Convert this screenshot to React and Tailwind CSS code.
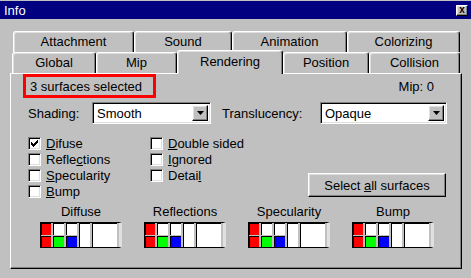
import React from 'react';

// Win95-style "Info" dialog, Rendering tab

const raised = 'border border-t-white border-l-white border-r-black border-b-black shadow-[inset_-1px_-1px_0_#808080,inset_1px_1px_0_#dfdfdf]';
const sunken = 'border border-t-[#808080] border-l-[#808080] border-r-white border-b-white shadow-[inset_1px_1px_0_#000,inset_-1px_-1px_0_#dfdfdf]';

const backTabs = [
  ['Attachment', 121],
  ['Sound', 98],
  ['Animation', 115],
  ['Colorizing', 113],
];

const frontTabs = [
  ['Global', 84],
  ['Mip', 81],
  ['Rendering', 106, true],
  ['Position', 86],
  ['Collision', 91],
];

function Tab({ label, width, active }) {
  return (
    <div
      style={{ width }}
      className={`flex items-center justify-center bg-[#c0c0c0] rounded-t-[3px] border-t border-l border-r border-t-white border-l-white border-r-black shadow-[inset_-1px_0_0_#808080,inset_1px_1px_0_#dfdfdf] ${
        active ? 'relative z-10 h-[24px] -mt-[2px] pb-[2px]' : 'h-[21px]'
      }`}
    >
      {label}
    </div>
  );
}

function Dropdown({ value, width }) {
  return (
    <div style={{ width }} className={`h-[22px] flex bg-white p-[2px] ${sunken}`}>
      <div className="flex-1 flex items-center pl-[2px] leading-none">{value}</div>
      <div className={`w-[16px] h-full bg-[#c0c0c0] flex items-center justify-center ${raised}`}>
        <svg width="7" height="4" viewBox="0 0 7 4">
          <path d="M0 0h7L3.5 4z" fill="#000" />
        </svg>
      </div>
    </div>
  );
}

function Checkbox({ checked, children }) {
  return (
    <div className="h-[16px] flex items-center gap-[5px]">
      <div className={`w-[13px] h-[13px] bg-white flex items-center justify-center ${sunken}`}>
        {checked && (
          <svg width="7" height="7" viewBox="0 0 7 7" shapeRendering="crispEdges">
            <path
              d="M6 0h1v3h-1v1h-1v1h-1v1h-1v1h-1v-1h-1v-1h-1v-3h1v1h1v1h1v-1h1v-1h1v-1h1z"
              fill="#000"
            />
          </svg>
        )}
      </div>
      <span className="leading-none">{children}</span>
    </div>
  );
}

function Half({ color, h }) {
  return <div className={`border-t border-l border-black ${h} ${color}`} />;
}

function Swatch() {
  return (
    <div className="w-[82px] h-[26px] flex gap-[2px] bg-[#c0c0c0] border-t border-b border-l border-black border-r-[3px] border-r-[#e0e0e0]">
      <div className="w-[10px] flex flex-col gap-[1px]">
        <Half color="bg-[#ff0000]" h="h-[12px]" />
        <Half color="bg-[#ff0000]" h="h-[11px]" />
      </div>
      <div className="w-[11px] flex flex-col gap-[1px]">
        <Half color="bg-white" h="h-[12px]" />
        <Half color="bg-[#00ff00]" h="h-[11px]" />
      </div>
      <div className="w-[11px] flex flex-col gap-[1px]">
        <Half color="bg-white" h="h-[12px]" />
        <Half color="bg-[#0000ff]" h="h-[11px]" />
      </div>
      <div className="w-[11px] border-t border-l border-black bg-white" />
      <div className="w-[25px] border-t border-l border-black bg-white" />
    </div>
  );
}

export default function App() {
  return (
    <div className="w-[471px] h-[278px] bg-[#c0c0c0] pt-[1px] font-['Liberation_Sans',Arial,sans-serif] text-[13px] text-black overflow-hidden">
      {/* Title bar */}
      <div className="h-[18px] bg-[#000080] flex items-center justify-between pl-[4px] pr-[3px]">
        <span className="text-white leading-none">Info</span>
        <div className={`w-[12px] h-[11px] bg-[#c0c0c0] flex items-center justify-center ${raised}`}>
          <span className="text-[10px] font-bold leading-none -mt-[1px]">x</span>
        </div>
      </div>

      {/* Tabs */}
      <div className="flex pl-[13px] mt-[12px]">
        {backTabs.map(([label, w]) => (
          <Tab key={label} label={label} width={w} />
        ))}
      </div>
      <div className="flex items-start h-[21px] pl-[12px]">
        {frontTabs.map(([label, w, active]) => (
          <Tab key={label} label={label} width={w} active={active} />
        ))}
      </div>

      {/* Panel */}
      <div className="ml-[10px] w-[452px] h-[196px] border border-t-white border-l-white border-r-black border-b-black shadow-[inset_-1px_-1px_0_#808080]">
        <div className="flex items-center justify-between pl-[12px] pr-[27px]">
          <div className="w-[133px] h-[24px] border-[3px] border-[#ff0000] flex items-center pl-[4px] leading-none">
            3 surfaces selected
          </div>
          <span className="leading-none">Mip: 0</span>
        </div>

        <div className="flex items-center mt-[4px] pl-[17px]">
          <span className="w-[64px] leading-none">Shading:</span>
          <Dropdown value="Smooth" width={119} />
          <span className="ml-[11px] w-[98px] leading-none">Translucency:</span>
          <Dropdown value="Opaque" width={127} />
        </div>

        <div className="flex mt-[11px] pl-[17px]">
          <div className="w-[122px]">
            <Checkbox checked>
              <u>D</u>ifuse
            </Checkbox>
            <Checkbox>
              Refle<u>c</u>tions
            </Checkbox>
            <Checkbox>
              <u>S</u>pecularity
            </Checkbox>
            <Checkbox>
              <u>B</u>ump
            </Checkbox>
          </div>
          <div className="w-[158px]">
            <Checkbox>
              <u>D</u>ouble sided
            </Checkbox>
            <Checkbox>
              <u>I</u>gnored
            </Checkbox>
            <Checkbox>
              Detai<u>l</u>
            </Checkbox>
          </div>
          <div
            className={`mt-[38px] w-[138px] h-[24px] flex items-center justify-center bg-[#c0c0c0] leading-none ${raised}`}
          >
            <span>
              Select <u>a</u>ll surfaces
            </span>
          </div>
        </div>

        <div className="flex gap-[22px] pl-[29px] mt-[5px]">
          {['Diffuse', 'Reflections', 'Specularity', 'Bump'].map((name) => (
            <div key={name} className="flex flex-col items-center">
              <div className="h-[16px] leading-[16px]">{name}</div>
              <div className="mt-[2px]">
                <Swatch />
              </div>
            </div>
          ))}
        </div>
      </div>
    </div>
  );
}
